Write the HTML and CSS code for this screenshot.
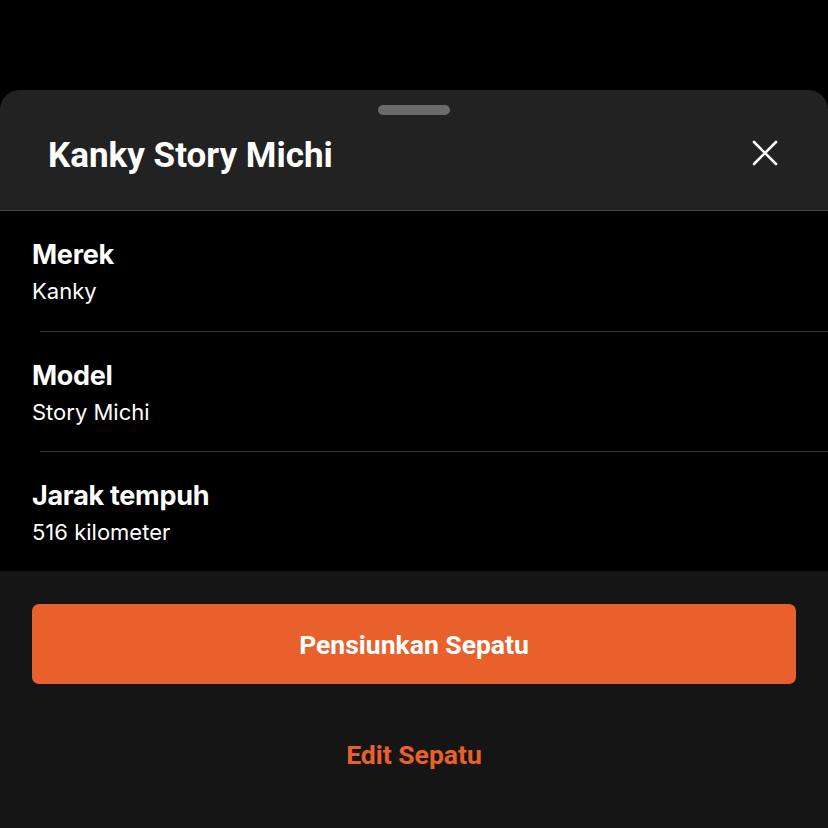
FILE: index.html
```
<!doctype html>
<html>
<head>
	<meta name="viewport" content="width=device-width, initial-scale=1.0">
	<title>Kanky Story Michi</title>
	<link rel="stylesheet" href="styles.css">
</head>
<body>

	<div class="sheet">
		<div class="sheet-head">
			<div class="handle"></div>
			<div class="head-row">
				<h1>Kanky Story Michi</h1>
				<button class="close" aria-label="Tutup">
					<svg width="26" height="26" viewBox="0 0 26 26"><path d="M2 2 L24 24 M24 2 L2 24" stroke="#fff" stroke-width="2.6" stroke-linecap="round"/></svg>
				</button>
			</div>
		</div>

		<div class="details">
			<div class="item">
				<div class="label">Merek</div>
				<div class="value">Kanky</div>
			</div>
			<div class="item">
				<div class="label">Model</div>
				<div class="value">Story Michi</div>
			</div>
			<div class="item">
				<div class="label">Jarak tempuh</div>
				<div class="value">516 kilometer</div>
			</div>
		</div>

		<div class="actions">
			<button class="btn-primary">Pensiunkan Sepatu</button>
			<button class="btn-link">Edit Sepatu</button>
		</div>
	</div>

</body>
</html>
```
FILE: styles.css
```
* {
	box-sizing: border-box;
}
body {
	background: #000;
	font-family: Inter, "Noto Sans", sans-serif;
	color: #fff;
	margin: 0;
	padding-top: 90px;
	height: 828px;
	overflow: hidden;
}
.sheet {
	border-radius: 20px 20px 0 0;
	overflow: hidden;
	background: #151515;
}
.sheet-head {
	background: #222;
	height: 121px;
	border-bottom: 1px solid #444;
	padding-top: 15px;
}
.handle {
	width: 72px;
	height: 10px;
	border-radius: 5px;
	background: #6b6b6b;
	margin: 0 auto;
}
.head-row {
	display: flex;
	align-items: center;
	justify-content: space-between;
	padding: 21px 50px 0 48px;
}
h1 {
	margin: 0;
	font-family: Roboto, sans-serif;
	font-size: 35px;
	font-weight: 700;
	letter-spacing: 0;
	line-height: 40px;
}
.close {
	background: transparent;
	border: 0;
	padding: 0;
	width: 26px;
	height: 26px;
	display: flex;
	margin-top: -6px;
	cursor: pointer;
}
.details {
	background: #000;
}
.item {
	height: 120px;
	padding: 27px 32px 0 32px;
}
.item + .item {
	border-top: 1px solid #3a3a3a;
	margin-left: 40px;
	padding-left: 0;
}
.item + .item .label,
.item + .item .value {
	margin-left: -8px;
}
.label {
	font-size: 27px;
	font-weight: 700;
	line-height: 34px;
	letter-spacing: -0.3px;
}
.value {
	font-size: 22px;
	line-height: 32px;
	margin-top: 3px;
}
.actions {
	background: #151515;
	padding: 33px 32px 0 32px;
	height: 258px;
	display: flex;
	flex-direction: column;
	align-items: center;
}
.btn-primary {
	width: 100%;
	height: 80px;
	border: 0;
	border-radius: 7px;
	background: #e8612c;
	color: #fff;
	font-family: Roboto, sans-serif;
	font-size: 26.5px;
	font-weight: 700;
	letter-spacing: 0;
	cursor: pointer;
}
.btn-link {
	margin-top: 54px;
	background: transparent;
	border: 0;
	color: #e8612c;
	font-family: Roboto, sans-serif;
	font-size: 26.5px;
	font-weight: 700;
	letter-spacing: 0;
	cursor: pointer;
}
```
